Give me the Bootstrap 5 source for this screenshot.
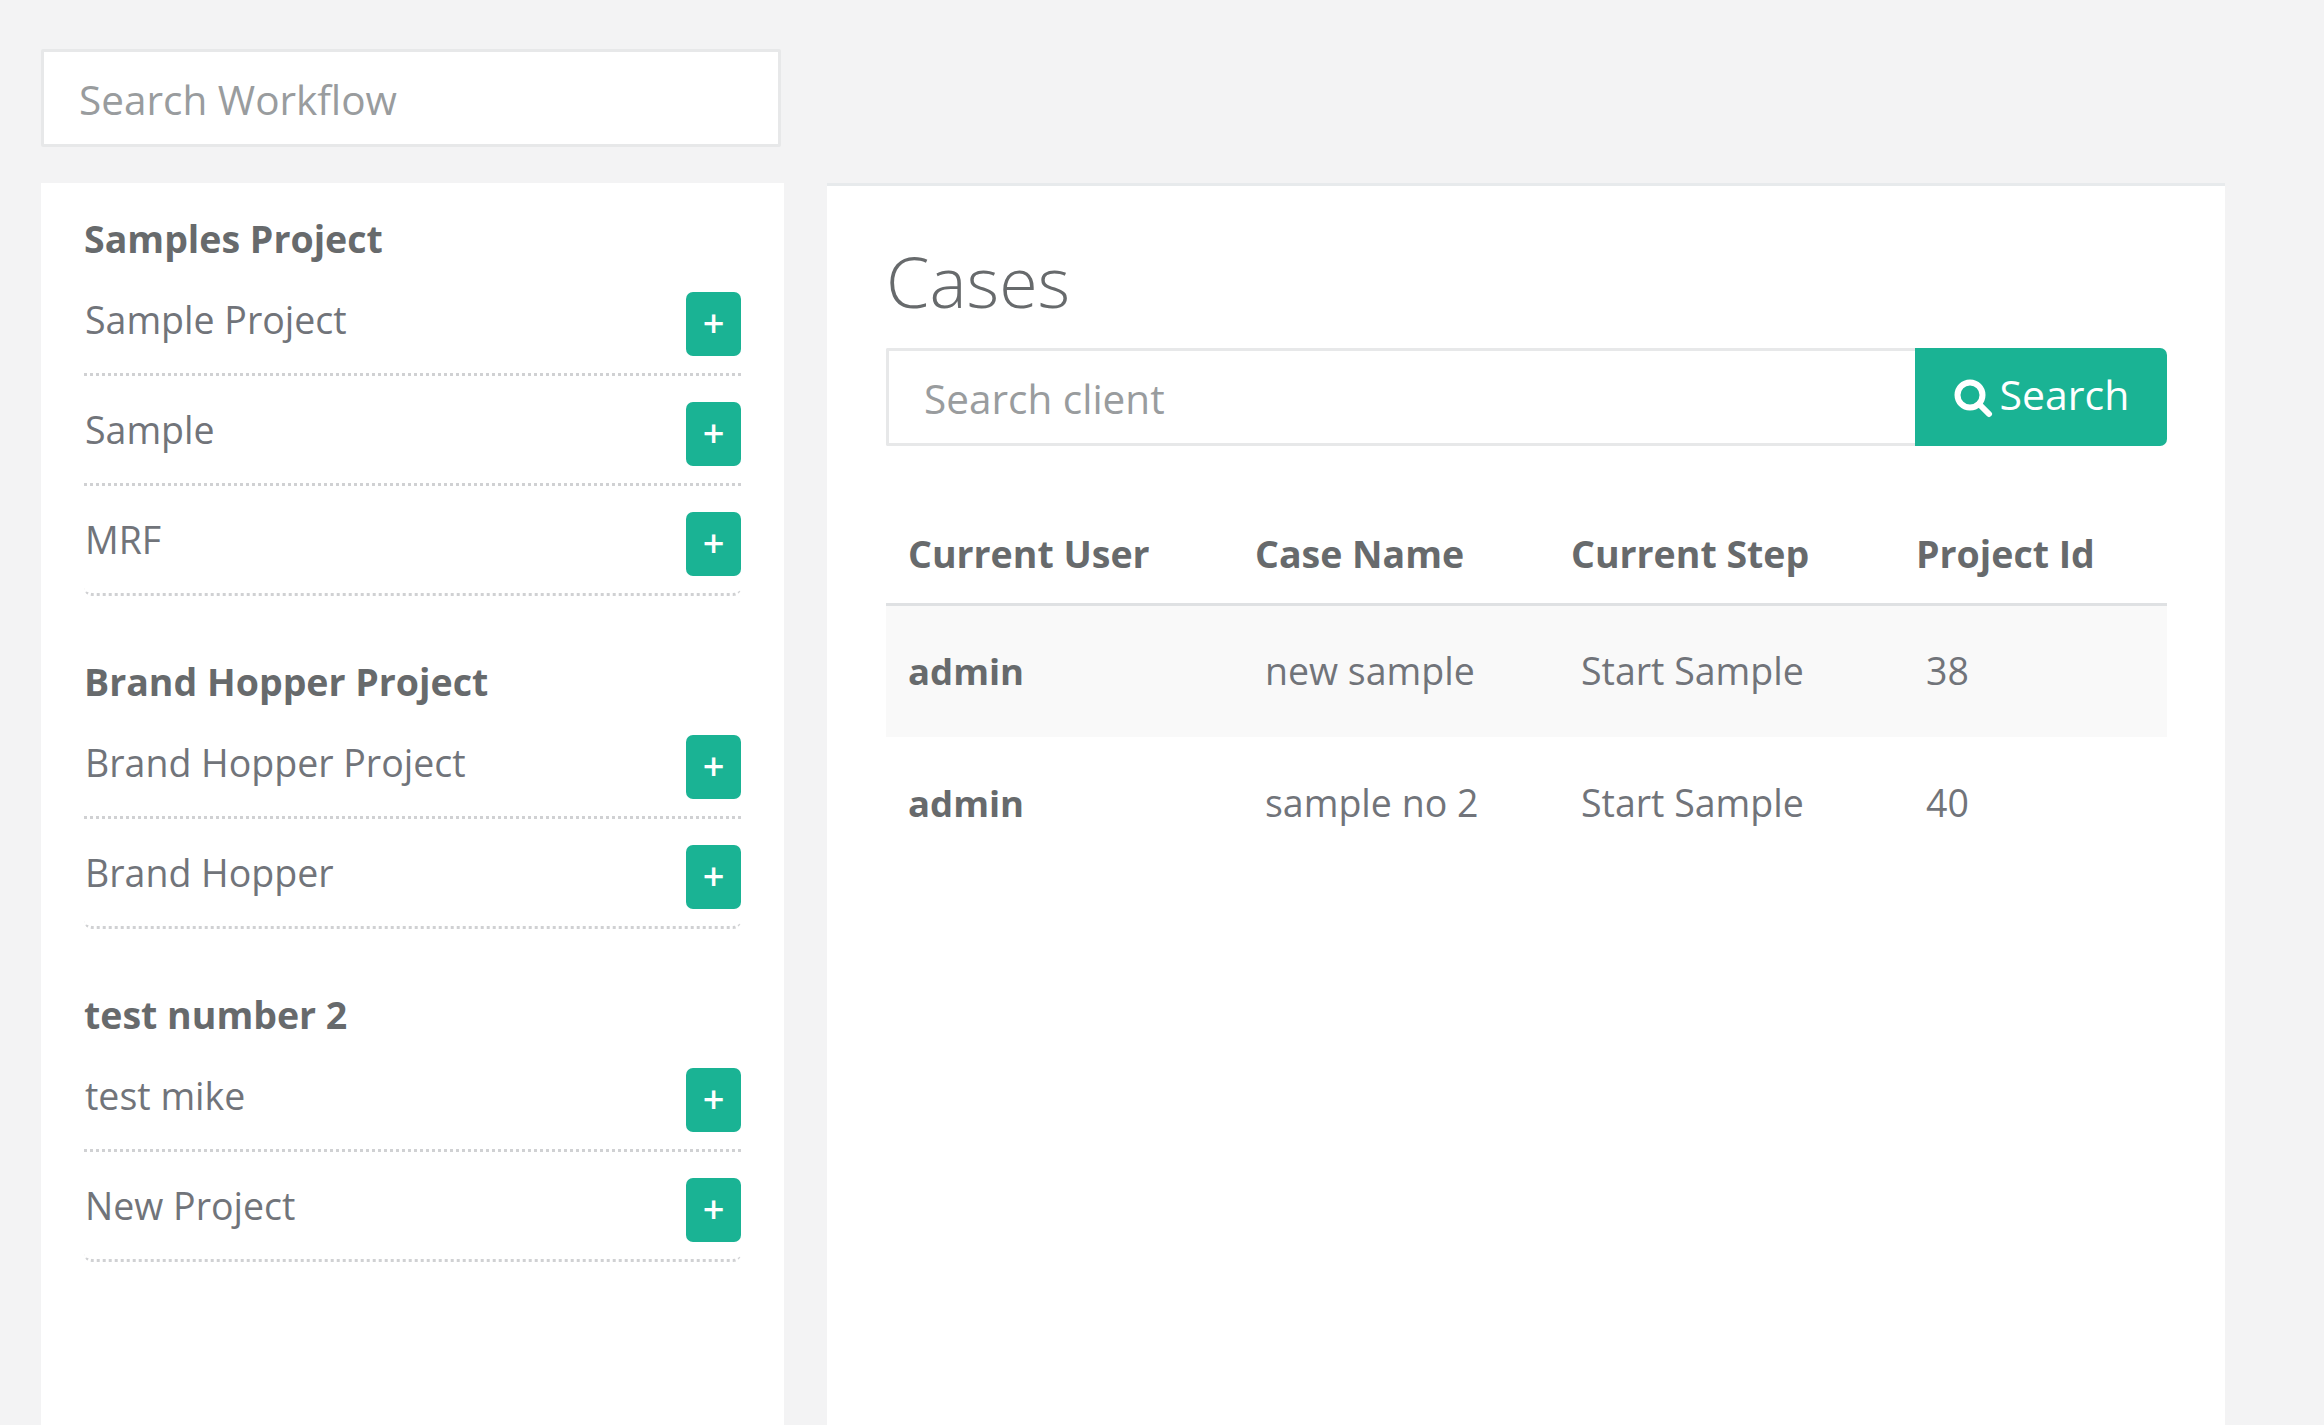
<!DOCTYPE html>
<html lang="en">
<head>
  <meta charset="UTF-8">
  <meta name="viewport" content="width=device-width, initial-scale=1.0">
  <title>Cases</title>
  <link rel="stylesheet" href="https://cdn.jsdelivr.net/npm/bootstrap@5.3.0/dist/css/bootstrap.min.css">
  <style>
    html, body { height: 100%; }
    body {
      background: #f3f3f4;
      color: #676a6c;
      font-family: "Open Sans", "Liberation Sans", sans-serif;
      font-size: 37.5px;
      overflow: hidden;
    }
    .page-wrap { height: 100vh; padding: 49px 0 0 41px; gap: 43px; }
    .side-col { width: 743px; }
    .main-col { width: 1398px; margin-top: 134px; }

    .search-box.form-control {
      height: 98px;
      padding: 2px 35px 0;
      font-size: 40.5px;
      color: #676a6c;
      border: 3px solid #e7e8e9;
      border-radius: 2px;
      background: #fff;
    }
    .search-box::placeholder { color: #999c9e; opacity: 1; }
    .side-col .search-box.form-control { width: 740px; }

    .side-card { margin-top: 36px; background: #fff; padding: 29px 43px 0; }
    .group-block { margin-bottom: 59px; }
    .group-title { font-size: 37.5px; font-weight: 700; line-height: 54px; margin: 0; color: #676a6c; }
    .workflow-list { --bs-list-group-border-radius: 8px; }
    .workflow-list .list-group-item {
      display: flex;
      justify-content: space-between;
      align-items: flex-start;
      height: 110px;
      padding: 27px 0 0;
      background: transparent;
      color: #71747a;
      border: 0;
      border-bottom: 3px dotted #d0d1d3;
    }
    .workflow-list .list-group-item span { line-height: 50px; margin: 2px 0 0 1px; }
    .add-btn.btn {
      width: 55px;
      height: 64px;
      padding: 0 0 5px;
      margin-top: -1px;
      background: #1ab394;
      border: 0;
      border-radius: 7px;
      color: #fff;
      font-size: 38px;
      font-weight: 600;
      line-height: 54px;
    }

    .main-card { height: 100%; background: #fff; border-top: 3px solid #e7eaec; padding: 0 58px 0 59px; }
    .cases-title { font-size: 70px; font-weight: 300; line-height: 96px; margin: 47px 0 0; color: #676a6c; }
    .client-group { margin-top: 19px; }
    .client-group .search-box { border-right: 0; }
    .find-btn.btn {
      width: 252px;
      height: 98px;
      padding: 0 0 4px;
      background: #1ab394;
      border: 0;
      border-radius: 0 7px 7px 0;
      color: #fff;
      font-size: 41px;
    }
    .find-btn svg { width: 40px; height: 40px; margin-right: 7px; vertical-align: -8px; }

    .cases-table { margin: 60px 0 0; table-layout: fixed; width: 1281px; color: #676a6c; }
    .cases-table th, .cases-table td { border: 0; color: #71747a; background: transparent; box-shadow: none; }
    .cases-table th { padding: 0 22px; height: 98px; vertical-align: middle; border-bottom: 3px solid #dfe1e3; font-weight: 700; color: #676a6c; }
    .cases-table td { padding: 0 0 0 32px; height: 133px; vertical-align: middle; }
    .cases-table td:first-child { padding-left: 22px; font-weight: 700; font-size: 36.5px; color: #676a6c; }
    .cases-table tbody tr:first-child td { background: #f9f9f9; }
    .col-user { width: 347px; }
    .col-name { width: 316px; }
    .col-step { width: 345px; }
    .col-id { width: 273px; }
  </style>
</head>
<body>
  <div class="page-wrap d-flex">
    <div class="side-col d-flex flex-column">
      <input type="text" class="form-control search-box" placeholder="Search Workflow">
      <div class="side-card flex-grow-1">
        <div class="group-block">
          <h5 class="group-title">Samples Project</h5>
          <ul class="list-group workflow-list">
            <li class="list-group-item"><span>Sample Project</span><button class="btn add-btn">+</button></li>
            <li class="list-group-item"><span>Sample</span><button class="btn add-btn">+</button></li>
            <li class="list-group-item"><span>MRF</span><button class="btn add-btn">+</button></li>
          </ul>
        </div>
        <div class="group-block">
          <h5 class="group-title">Brand Hopper Project</h5>
          <ul class="list-group workflow-list">
            <li class="list-group-item"><span>Brand Hopper Project</span><button class="btn add-btn">+</button></li>
            <li class="list-group-item"><span>Brand Hopper</span><button class="btn add-btn">+</button></li>
          </ul>
        </div>
        <div class="group-block">
          <h5 class="group-title">test number 2</h5>
          <ul class="list-group workflow-list">
            <li class="list-group-item"><span>test mike</span><button class="btn add-btn">+</button></li>
            <li class="list-group-item"><span>New Project</span><button class="btn add-btn">+</button></li>
          </ul>
        </div>
      </div>
    </div>

    <div class="main-col">
      <div class="main-card">
        <h1 class="cases-title">Cases</h1>
        <div class="input-group client-group">
          <input type="text" class="form-control search-box" placeholder="Search client">
          <button class="btn find-btn" type="button">
            <svg viewBox="0 0 40 40" aria-hidden="true"><circle cx="17" cy="17" r="12.5" fill="none" stroke="#fff" stroke-width="6"/><path d="M26 26l10 10" fill="none" stroke="#fff" stroke-width="6" stroke-linecap="round"/></svg>Search
          </button>
        </div>
        <table class="table cases-table">
          <colgroup>
            <col class="col-user"><col class="col-name"><col class="col-step"><col class="col-id">
          </colgroup>
          <thead>
            <tr><th>Current User</th><th>Case Name</th><th>Current Step</th><th>Project Id</th></tr>
          </thead>
          <tbody>
            <tr><td>admin</td><td>new sample</td><td>Start Sample</td><td>38</td></tr>
            <tr><td>admin</td><td>sample no 2</td><td>Start Sample</td><td>40</td></tr>
          </tbody>
        </table>
      </div>
    </div>
  </div>

  <script src="https://cdn.jsdelivr.net/npm/bootstrap@5.3.0/dist/js/bootstrap.bundle.min.js"></script>
</body>
</html>
